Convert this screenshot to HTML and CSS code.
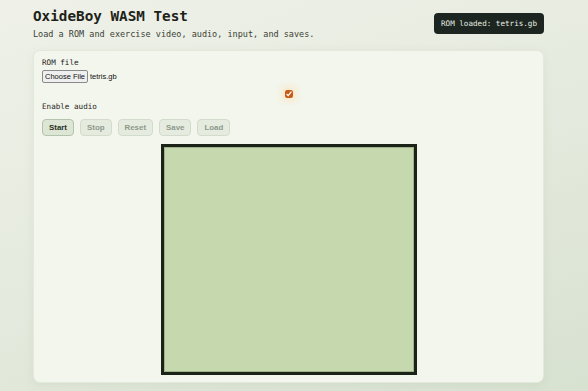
FILE: index.html
```html
<!DOCTYPE html>
<html>
<head>
<meta charset="utf-8">
<link rel="stylesheet" href="styles.css">
</head>
<body>
<div class="page">
  <header class="header">
    <div class="titles">
      <h1 class="title">OxideBoy WASM Test</h1>
      <p class="subtitle">Load a ROM and exercise video, audio, input, and saves.</p>
    </div>
    <div class="status">ROM loaded: tetris.gb</div>
  </header>
  <main class="card">
    <div class="field-label">ROM file</div>
    <div class="file-row">
      <span class="file-btn">Choose File</span>
      <span class="file-name">tetris.gb</span>
    </div>
    <label class="audio">
      <input class="audio-check" type="checkbox" checked>
      <span class="audio-text">Enable audio</span>
    </label>
    <div class="controls">
      <button class="btn">Start</button>
      <button class="btn" disabled>Stop</button>
      <button class="btn" disabled>Reset</button>
      <button class="btn" disabled>Save</button>
      <button class="btn" disabled>Load</button>
    </div>
    <div class="screen"></div>
  </main>
</div>
</body>
</html>
```
FILE: styles.css
```css
html, body {
  margin: 0;
  height: 100%;
}
body {
  background: linear-gradient(160deg, #eff1e8 0%, #e6ebdf 45%, #d8e2d1 100%);
  font-family: "DejaVu Sans Mono", monospace;
  color: #1d2219;
  overflow: hidden;
}
.page {
  width: 511px;
  padding: 5px 0 0 33px;
}
.header {
  display: flex;
  justify-content: space-between;
  align-items: center;
  height: 36px;
}
.title {
  margin: 0;
  font-size: 14.3px;
  line-height: 19px;
  font-weight: bold;
}
.subtitle {
  margin: 3px 0 0;
  font-size: 8.5px;
  line-height: 11px;
  color: #3a4236;
}
.status {
  background: #1d2520;
  color: #e8eee4;
  font-size: 7.6px;
  line-height: 21px;
  padding: 0 7px;
  border-radius: 4px;
  height: 21px;
  margin-top: 0;
}
.card {
  margin-top: 9px;
  background: #f3f6ed;
  border: 1px solid #e3e9dc;
  border-radius: 7px;
  box-shadow: 0 2px 10px rgba(90, 110, 80, 0.08);
  padding: 7px 8px 7px;
  display: flex;
  flex-direction: column;
  align-items: flex-start;
}
.field-label {
  font-size: 7.6px;
  line-height: 10px;
}
.file-row {
  display: flex;
  align-items: center;
  margin-top: 2px;
  font-family: "Liberation Sans", Arial, sans-serif;
  font-size: 7.5px;
}
.file-btn {
  background: #efefef;
  border: 1px solid #8a8a8a;
  border-radius: 2px;
  height: 11px;
  line-height: 11px;
  padding: 0 2px;
  color: #111;
}
.file-name {
  margin-left: 2px;
  color: #111;
}
.audio {
  display: flex;
  flex-direction: column;
  align-self: stretch;
  margin-top: 7px;
}
.audio-check {
  align-self: center;
  width: 8px;
  height: 8px;
  margin: 0;
  accent-color: #c85a18;
  box-shadow: 0 0 6px 3px rgba(255, 214, 160, 0.45);
}
.audio-text {
  margin-top: 4px;
  font-size: 7.6px;
  line-height: 10px;
}
.controls {
  display: flex;
  gap: 6px;
  margin-top: 7px;
}
.btn {
  font-family: "Liberation Sans", Arial, sans-serif;
  font-weight: bold;
  font-size: 7.9px;
  height: 17px;
  padding: 0 6px;
  border-radius: 4px;
  background: #dde6d4;
  border: 1px solid #b4c3ab;
  color: #28311f;
  margin: 0;
}
.btn:disabled {
  background: #e5ebdf;
  border-color: #d3dccc;
  color: #8e998b;
}
.screen {
  align-self: center;
  margin-top: 8px;
  width: 250px;
  height: 225px;
  background: #c6d8ae;
  border: 3px solid #1b2317;
  box-shadow: inset 0 0 0 1px #9fb08c;
}
```
